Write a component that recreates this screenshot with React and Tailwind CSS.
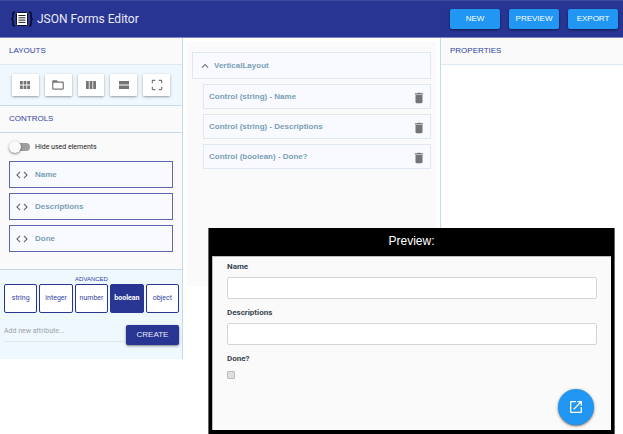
import { useState } from "react";
import {
  MdCode,
  MdCropFree,
  MdDelete,
  MdExpandLess,
  MdFolderOpen,
  MdOpenInNew,
} from "react-icons/md";

function GroupIcon() {
  return (
    <svg viewBox="0 0 10 8" className="h-2 w-[10px]" fill="currentColor" aria-hidden="true">
      <path d="M0 0h2.800v3.600H0zM3.600 0h2.800v3.600H3.600zM7.200 0H10v3.600H7.200zM0 4.400h2.800V8H0zM3.600 4.400h2.800V8H3.600zM7.200 4.400H10V8H7.200z" />
    </svg>
  );
}

function HorizontalIcon() {
  return (
    <svg viewBox="0 0 10 8" className="h-2 w-[10px]" fill="currentColor" aria-hidden="true">
      <path d="M0 0h2.800v8H0zM3.600 0h2.800v8H3.600zM7.200 0H10v8H7.200z" />
    </svg>
  );
}

function VerticalIcon() {
  return (
    <svg viewBox="0 0 10 8" className="h-2 w-[10px]" fill="currentColor" aria-hidden="true">
      <path d="M0 0h10v3.500H0zM0 4.500h10V8H0z" />
    </svg>
  );
}

const layouts = [
  { name: "Group", Icon: GroupIcon },
  { name: "Category", Icon: MdFolderOpen },
  { name: "Horizontal layout", Icon: HorizontalIcon },
  { name: "Vertical layout", Icon: VerticalIcon },
  { name: "Full size", Icon: MdCropFree },
];
const controls = ["Name", "Descriptions", "Done"];
const types = ["string", "integer", "number", "boolean", "object"];
const elements = [
  "Control (string) - Name",
  "Control (string) - Descriptions",
  "Control (boolean) - Done?",
];

function Logo() {
  return (
    <svg viewBox="0 0 22 16" className="h-4 w-[22px]" aria-hidden="true">
      <path
        d="M4 1C2.500 1 2 1.700 2 3v2.500C2 7 1.700 7.700.5 8 1.700 8.300 2 9 2 10.500V13c0 1.300.5 2 2 2M18 1c1.500 0 2 .7 2 2v2.500c0 1.500.3 2.200 1.500 2.500-1.200.3-1.500 1-1.500 2.500V13c0 1.300-.5 2-2 2"
        fill="none"
        stroke="#07081a"
        strokeWidth="1.500"
      />
      <rect x="5.500" y="1.500" width="11" height="13" rx="1" fill="#fff" stroke="#0b0d20" />
      <path d="M7.500 4.500h7M7.500 6.800h7M7.500 9.100h7M7.500 11.400h7" stroke="#222" />
    </svg>
  );
}

function PanelTitle({ children }) {
  return (
    <h2 className="flex h-[27px] items-center border-b border-[#dbeaf3] bg-[#fafafa] px-[9px] text-[8px] text-[#303f9f]">
      {children}
    </h2>
  );
}

function HeaderButton({ children }) {
  return (
    <button className="h-5 w-[50px] rounded-xs bg-[#2196f3] text-[8px] text-white shadow-sm shadow-black/40">
      {children}
    </button>
  );
}

function TextField({ label, id }) {
  return (
    <div className="mb-1">
      <label htmlFor={id} className="block h-5 font-[Roboto,sans-serif] text-[8px] leading-5 font-bold text-[#37474f]">
        {label}
      </label>
      <input
        id={id}
        className="block h-[22px] w-full rounded-xs border border-[#d5d5d5] bg-white px-2 text-[8px] outline-none"
      />
    </div>
  );
}

export default function App() {
  const [type, setType] = useState("boolean");

  return (
    <div className="relative min-h-screen bg-white font-['Liberation_Sans',Arial,sans-serif]">
      <header className="flex h-[38px] items-center justify-between border-t border-b border-t-[#3f4a9f] border-b-[#7c84c4] bg-[#283593] pr-[5px] pl-[11px]">
        <div className="flex items-center gap-1">
          <Logo />
          <h1 className="font-[Roboto,sans-serif] text-[12px] text-[#e8eaf6]">JSON Forms Editor</h1>
        </div>
        <nav className="flex gap-[9px]">
          <HeaderButton>NEW</HeaderButton>
          <HeaderButton>PREVIEW</HeaderButton>
          <HeaderButton>EXPORT</HeaderButton>
        </nav>
      </header>

      <div className="flex">
        <aside className="w-[183px] shrink-0 border-r border-[#c5dbe7] bg-[#fafafa]">
          <PanelTitle>LAYOUTS</PanelTitle>
          <div className="flex gap-[6px] border-b border-[#c5dbe7] bg-[#f0f8ff] px-3 py-[9px]">
            {layouts.map(({ name, Icon }) => (
              <button
                key={name}
                aria-label={name}
                className="flex h-[22px] w-[27px] items-center justify-center rounded-[1px] bg-white text-[#757575] shadow-sm shadow-black/30"
              >
                <Icon size={14} />
              </button>
            ))}
          </div>
          <h2 className="flex h-[27px] items-center border-b border-[#c5dbe7] px-[9px] text-[8px] text-[#303f9f]">
            CONTROLS
          </h2>
          <section className="px-[9px] pt-2 pb-[17px]">
            <label className="mb-2 flex h-3 items-center gap-[5px] font-[Roboto,sans-serif] text-[7px] text-[#212121]">
              <input type="checkbox" className="peer sr-only" />
              <span className="flex h-3 w-[21px] items-center">
                <span className="relative size-3 rounded-full bg-[#fafafa] shadow-sm shadow-black/40" />
                <span className="-ml-1 h-2 flex-1 rounded-r-full bg-[#9e9e9e]" />
              </span>
              Hide used elements
            </label>
            <ul className="flex flex-col gap-[5px]">
              {controls.map((name) => (
                <li
                  key={name}
                  className="flex h-[27px] items-center gap-[6px] border border-[#5c66b0] bg-[#f8faff] px-[5px] text-[8px] font-bold text-[#7a9eb5]"
                >
                  <MdCode size={14} className="text-[#666]" />
                  {name}
                </li>
              ))}
            </ul>
          </section>
          <section className="border-t border-[#c5dbe7] bg-[#f0f8ff] pt-1 pr-[3px] pb-[14px] pl-1">
            <h3 className="text-center text-[6px] leading-[10px] text-[#303f9f]">ADVANCED</h3>
            <div className="flex gap-[2px] font-[Roboto,sans-serif] text-[7px]">
              {types.map((name) => (
                <button
                  key={name}
                  aria-pressed={type === name}
                  onClick={() => setType(name)}
                  className={
                    type === name
                      ? "h-[29px] min-w-0 flex-1 rounded-xs border border-[#283593] bg-[#283593] font-bold text-white"
                      : "h-[29px] min-w-0 flex-1 rounded-xs border border-[#283593] bg-white text-[#303f9f]"
                  }
                >
                  {name}
                </button>
              ))}
            </div>
            <form className="mt-3 flex items-start gap-px">
              <input
                aria-label="New attribute"
                placeholder="Add new attribute..."
                className="h-[17px] min-w-0 flex-1 border-b border-[#dfe7ee] bg-transparent pb-1 font-[Roboto,sans-serif] text-[7px] outline-none placeholder:text-[#9aa3ab]"
              />
              <button
                type="button"
                className="h-5 w-[53px] rounded-xs bg-[#283593] text-[8px] text-[#e8eaf6] shadow-sm shadow-black/40"
              >
                CREATE
              </button>
            </form>
          </section>
        </aside>

        <main className="min-w-0 flex-1 px-1 pt-1">
          <div className="h-[244px] bg-[#fafafa] px-[5px] pt-[10px] text-[8px] font-bold text-[#7a9eb5]">
            <div className="flex h-[27px] items-center gap-[2px] border border-[#dfe7f0] bg-[#f8faff] px-[5px]">
              <MdExpandLess size={14} className="text-[#757575]" />
              VerticalLayout
            </div>
            <ul className="mt-[5px] ml-[11px] flex flex-col gap-[5px]">
              {elements.map((name) => (
                <li
                  key={name}
                  className="flex h-[25px] items-center justify-between border border-[#dfe7f0] bg-[#f8faff] pr-1 pl-[5px]"
                >
                  {name}
                  <button aria-label={"Delete " + name} className="pt-[2px] text-[#757575]">
                    <MdDelete size={14} />
                  </button>
                </li>
              ))}
            </ul>
          </div>
        </main>

        <aside className="w-[183px] shrink-0 border-l border-[#c5dbe7]">
          <PanelTitle>PROPERTIES</PanelTitle>
        </aside>
      </div>

      <section
        aria-labelledby="preview-title"
        className="absolute top-[228px] right-[8px] bottom-0 left-[208px] flex flex-col border-x border-[#666] bg-black px-[3px] pb-1"
      >
        <h2 id="preview-title" className="h-7 text-center text-[12px] leading-[26px] text-white">
          Preview:
        </h2>
        <form className="relative flex-1 border-t border-l border-[#bbb] bg-[#fafafa] px-[14px]">
          <TextField label="Name" id="field-name" />
          <TextField label="Descriptions" id="field-descriptions" />
          <label
            htmlFor="field-done"
            className="mb-[2px] block h-5 font-[Roboto,sans-serif] text-[8px] leading-5 font-bold text-[#37474f]"
          >
            Done?
          </label>
          <input
            id="field-done"
            type="checkbox"
            className="block size-2 appearance-none rounded-[1px] border border-[#bdbdbd] bg-[#dedede]"
          />
          <button
            type="button"
            aria-label="Open preview in new window"
            className="absolute right-[17px] bottom-[5px] flex size-9 items-center justify-center rounded-full bg-[#2196f3] text-white shadow-sm shadow-black/50"
          >
            <MdOpenInNew size={16} />
          </button>
        </form>
      </section>
    </div>
  );
}
